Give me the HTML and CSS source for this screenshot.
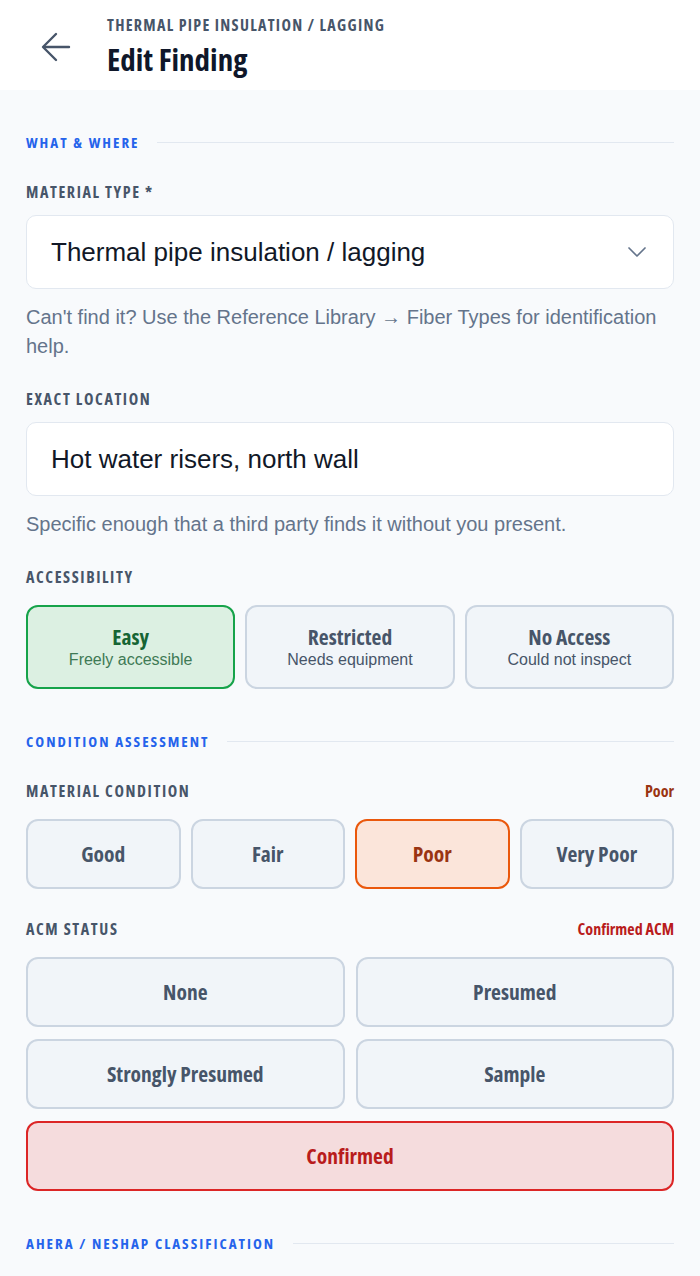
FILE: index.html
```html
<!DOCTYPE html>
<html lang="en">
<head>
    <meta charset="UTF-8">
    <meta name="viewport" content="width=device-width, initial-scale=1.0">
    <title>Edit Finding</title>
    <link rel="stylesheet" href="styles.css">
</head>
<body>
    <header class="top-bar">
        <button class="back-btn" aria-label="Back">
            <svg width="30" height="30" viewBox="0 0 30 30" fill="none" stroke="currentColor" stroke-width="2.4" stroke-linecap="round" stroke-linejoin="round">
                <path d="M28 15H3"/>
                <path d="M15 2L2 15l13 13"/>
            </svg>
        </button>
        <div class="titles">
            <div class="crumb">Thermal Pipe Insulation / Lagging</div>
            <h1>Edit Finding</h1>
        </div>
    </header>

    <main class="content">
        <div class="section-head"><span>What &amp; Where</span></div>

        <div class="field">
            <div class="label-row"><label>Material Type *</label></div>
            <div class="select-box">
                <span>Thermal pipe insulation / lagging</span>
                <svg width="20" height="20" viewBox="0 0 20 20" fill="none" stroke="#64748b" stroke-width="1.7" stroke-linecap="round" stroke-linejoin="round">
                    <path d="M2 6l8 8 8-8"/>
                </svg>
            </div>
            <p class="hint">Can't find it? Use the Reference Library → Fiber Types for identification help.</p>
        </div>

        <div class="field">
            <div class="label-row"><label>Exact Location</label></div>
            <div class="text-box">Hot water risers, north wall</div>
            <p class="hint">Specific enough that a third party finds it without you present.</p>
        </div>

        <div class="field choices">
            <div class="label-row"><label>Accessibility</label></div>
            <div class="choice-grid cols-3">
                <div class="choice tall sel-green">
                    <strong>Easy</strong>
                    <small>Freely accessible</small>
                </div>
                <div class="choice tall">
                    <strong>Restricted</strong>
                    <small>Needs equipment</small>
                </div>
                <div class="choice tall">
                    <strong>No Access</strong>
                    <small>Could not inspect</small>
                </div>
            </div>
        </div>

        <div class="section-head"><span>Condition Assessment</span></div>

        <div class="field choices">
            <div class="label-row">
                <label>Material Condition</label>
                <span class="value orange">Poor</span>
            </div>
            <div class="choice-grid cols-4">
                <div class="choice"><strong>Good</strong></div>
                <div class="choice"><strong>Fair</strong></div>
                <div class="choice sel-orange"><strong>Poor</strong></div>
                <div class="choice"><strong>Very Poor</strong></div>
            </div>
        </div>

        <div class="field choices">
            <div class="label-row">
                <label>ACM Status</label>
                <span class="value red">Confirmed ACM</span>
            </div>
            <div class="choice-grid cols-2">
                <div class="choice"><strong>None</strong></div>
                <div class="choice"><strong>Presumed</strong></div>
                <div class="choice"><strong>Strongly Presumed</strong></div>
                <div class="choice"><strong>Sample</strong></div>
                <div class="choice wide sel-red"><strong>Confirmed</strong></div>
            </div>
        </div>

        <div class="section-head"><span>AHERA / NESHAP Classification</span></div>
    </main>
</body>
</html>
```

FILE: styles.css
```css
body {
    margin: 0;
    background-color: #f8fafc;
    font-family: "Liberation Sans", Arial, sans-serif;
    color: #0f172a;
}
.top-bar {
    display: flex;
    align-items: center;
    gap: 36px;
    height: 90px;
    padding: 0 26px 0 41px;
    background: white;
}
.back-btn {
    background: none;
    border: none;
    padding: 0;
    margin-top: 4px;
    color: #475569;
    display: flex;
    cursor: pointer;
}
.titles {
    display: flex;
    flex-direction: column;
    padding-top: 2px;
}
.crumb,
h1,
.section-head span,
.label-row label,
.value,
.choice strong {
    font-family: "Open Sans", "DejaVu Sans Condensed", sans-serif;
    font-stretch: 75%;
    font-weight: 700;
}
.crumb {
    font-size: 16px;
    line-height: 20px;
    letter-spacing: 1.3px;
    text-transform: uppercase;
    color: #475569;
}
h1 {
    margin: 6px 0 0;
    font-size: 31px;
    line-height: 36px;
    color: #0f172a;
}
.content {
    padding: 0 26px 20px;
}
/* margins collapse with the field above, so 42px is the full gap */
.section-head {
    display: flex;
    align-items: center;
    gap: 18px;
    height: 20px;
    margin: 42px 0 30px;
}
.section-head span {
    font-size: 15px;
    line-height: 20px;
    letter-spacing: 2px;
    text-transform: uppercase;
    color: #2563eb;
    white-space: nowrap;
}
.section-head::after {
    content: "";
    flex: 1;
    height: 1px;
    background: #e2e8f0;
}
.field {
    margin-bottom: 28px;
}
.field.choices {
    margin-bottom: 30px;
}
.label-row {
    display: flex;
    justify-content: space-between;
    align-items: center;
    height: 20px;
    margin-bottom: 13px;
}
.choices .label-row {
    margin-bottom: 18px;
}
.label-row label,
.value {
    font-size: 16px;
    line-height: 20px;
    letter-spacing: 1.6px;
    text-transform: uppercase;
    color: #475569;
}
.value {
    text-transform: none;
    letter-spacing: 0;
}
.value.orange { color: #9a3412; }
.value.red { color: #b91c1c; }
.select-box,
.text-box {
    box-sizing: border-box;
    display: flex;
    align-items: center;
    justify-content: space-between;
    height: 74px;
    padding: 0 26px 0 24px;
    background: white;
    border: 1px solid #e2e8f0;
    border-radius: 10px;
    font-size: 26px;
    color: #111827;
}
.hint {
    margin: 14px 0 0;
    font-size: 20px;
    line-height: 29px;
    color: #64748b;
}
.choice-grid {
    display: grid;
    gap: 11px 10px;
}
.cols-3 { grid-template-columns: repeat(3, 1fr); }
.cols-4 { grid-template-columns: repeat(4, 1fr); }
.cols-2 { grid-template-columns: repeat(2, 1fr); gap: 12px 11px; }
.choice {
    box-sizing: border-box;
    display: flex;
    flex-direction: column;
    align-items: center;
    justify-content: center;
    height: 70px;
    background: #f1f5f9;
    border: 2px solid #cbd5e1;
    border-radius: 12px;
    color: #475569;
}
.choice.tall {
    height: 84px;
}
.choice.wide {
    grid-column: 1 / -1;
}
.choice strong {
    font-size: 21.5px;
    line-height: 26px;
}
.choice small {
    font-size: 16px;
    line-height: 20px;
}
.sel-green {
    background: #dcf0e2;
    border-color: #16a34a;
    color: #166534;
}
.sel-green small {
    color: #3f7a55;
}
.sel-orange {
    background: #fbe5da;
    border-color: #ea580c;
    color: #9a3412;
}
.sel-red {
    background: #f5dcdd;
    border-color: #dc2626;
    color: #b91c1c;
}
```
